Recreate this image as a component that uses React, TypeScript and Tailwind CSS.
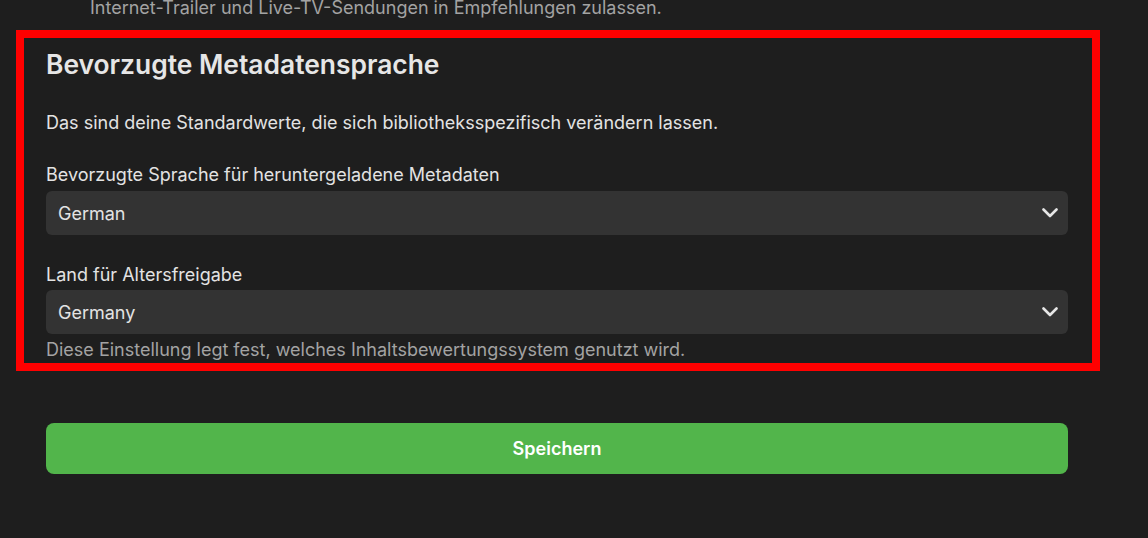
export default function App() {
  const font = { fontFamily: 'Inter, "Noto Sans", sans-serif' };
  return (
    <div className="h-[538px] w-[1148px] overflow-hidden bg-[#1e1e1e] text-[#e3e3e3]" style={font}>
      <p className="-mt-[4px] pl-[90px] text-[18px] leading-[24px] text-[#a3a3a3]">
        Internet-Trailer und Live-TV-Sendungen in Empfehlungen zulassen.
      </p>
      <div className="mx-[16px] mt-[10px] w-[1084px] border-[8px] border-[#ff0000] pt-[11px] pb-[1px] pl-[22px] pr-[24px]">
        <h2 className="text-[26.4px] leading-[30px] font-semibold text-[#e6e6e6]">Bevorzugte Metadatensprache</h2>
        <p className="mt-[32px] text-[18px] leading-[24px]">
          Das sind deine Standardwerte, die sich bibliotheksspezifisch verändern lassen.
        </p>
        <Field label="Bevorzugte Sprache für heruntergeladene Metadaten" value="German" gap="mt-[4px]" />
        <Field label="Land für Altersfreigabe" value="Germany" gap="mt-[3px]" />
        <p className="mt-[4px] text-[18px] leading-[24px] text-[#a3a3a3]">
          Diese Einstellung legt fest, welches Inhaltsbewertungssystem genutzt wird.
        </p>
      </div>
      <div className="mt-[52px] pl-[46px]">
        <button className="flex h-[51px] w-[1022px] items-center justify-center rounded-[8px] bg-[#52b54b] text-[18px] font-semibold text-white">
          Speichern
        </button>
      </div>
    </div>
  );
}

function Field({ label, value, gap }: { label: string; value: string; gap: string }) {
  return (
    <div className="mt-[28px]">
      <div className="text-[18px] leading-[24px]">{label}</div>
      <div className={`${gap} flex h-[44px] items-center justify-between rounded-[6px] bg-[#333333] pl-[12px] pr-[10px]`}>
        <span className="text-[18px] text-[#e3e3e3]">{value}</span>
        <svg width="16" height="10" viewBox="0 0 16 10" fill="none">
          <polyline points="1.5,1.5 8,8 14.5,1.5" stroke="#e6e6e6" strokeWidth="2.6" strokeLinecap="round" strokeLinejoin="round" />
        </svg>
      </div>
    </div>
  );
}
